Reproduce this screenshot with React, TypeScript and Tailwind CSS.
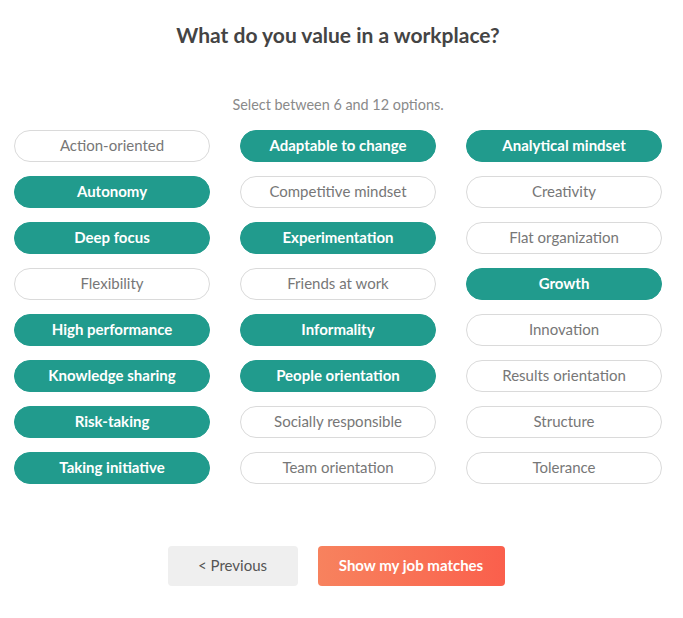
import React from 'react';

const options: { label: string; selected: boolean }[] = [
  { label: 'Action-oriented', selected: false },
  { label: 'Adaptable to change', selected: true },
  { label: 'Analytical mindset', selected: true },
  { label: 'Autonomy', selected: true },
  { label: 'Competitive mindset', selected: false },
  { label: 'Creativity', selected: false },
  { label: 'Deep focus', selected: true },
  { label: 'Experimentation', selected: true },
  { label: 'Flat organization', selected: false },
  { label: 'Flexibility', selected: false },
  { label: 'Friends at work', selected: false },
  { label: 'Growth', selected: true },
  { label: 'High performance', selected: true },
  { label: 'Informality', selected: true },
  { label: 'Innovation', selected: false },
  { label: 'Knowledge sharing', selected: true },
  { label: 'People orientation', selected: true },
  { label: 'Results orientation', selected: false },
  { label: 'Risk-taking', selected: true },
  { label: 'Socially responsible', selected: false },
  { label: 'Structure', selected: false },
  { label: 'Taking initiative', selected: true },
  { label: 'Team orientation', selected: false },
  { label: 'Tolerance', selected: false },
];

export default function App() {
  return (
    <div
      className="min-h-screen bg-white w-[676px] flex flex-col items-center"
      style={{ fontFamily: 'Lato, "Open Sans", sans-serif' }}
    >
      <h1 className="mt-[22px] text-[21px] font-bold text-[#444444] leading-[26px]">
        What do you value in a workplace?
      </h1>
      <p className="mt-[48px] text-[14.4px] text-[#8a8a8a] leading-[18px]">
        Select between 6 and 12 options.
      </p>
      <div className="mt-[16px] grid grid-cols-[196px_196px_196px] gap-x-[30px] gap-y-[14px]">
        {options.map((o) =>
          o.selected ? (
            <button
              key={o.label}
              className="h-[32px] pb-[2px] rounded-full bg-[#219b8d] border border-[#219b8d] text-white font-bold text-[15px]"
            >
              {o.label}
            </button>
          ) : (
            <button
              key={o.label}
              className="h-[32px] pb-[2px] rounded-full bg-white border border-[#dadada] text-[#777777] text-[15px]"
            >
              {o.label}
            </button>
          )
        )}
      </div>
      <div className="mt-[62px] flex gap-[20px] -ml-[4px]">
        <button className="w-[130px] h-[40px] pb-[2px] rounded-[4px] bg-[#efefef] text-[#555555] text-[15px]">
          &lt; Previous
        </button>
        <button className="w-[187px] h-[40px] pb-[2px] rounded-[4px] bg-gradient-to-r from-[#f7825e] to-[#fa5f4c] text-white font-bold text-[15px]">
          Show my job matches
        </button>
      </div>
    </div>
  );
}
